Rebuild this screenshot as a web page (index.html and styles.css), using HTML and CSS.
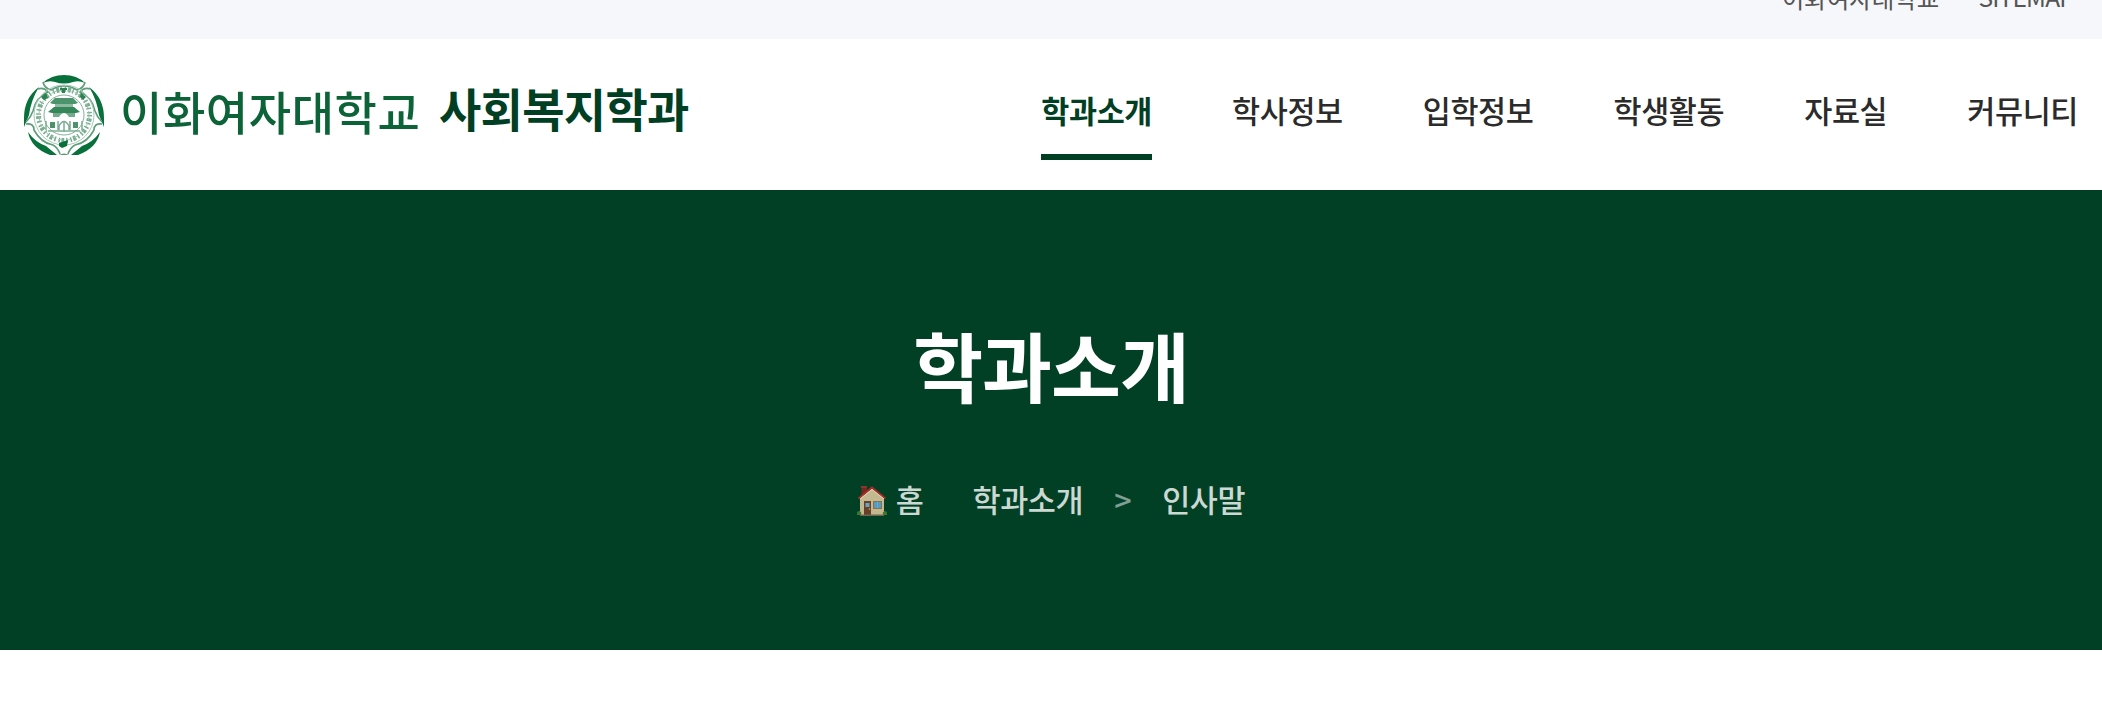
FILE: index.html
```html
<!DOCTYPE html>
<html lang="ko">
<head>
<meta charset="utf-8">
<title>학과소개 - 이화여자대학교 사회복지학과</title>
<link rel="stylesheet" href="styles.css">
</head>
<body>
<div class="topbar"><a class="top-link">이화여자대학교</a><a class="top-link">SITEMAP</a></div>
<header class="header">
  <div class="brand">
    <svg class="emblem" viewBox="0 0 80 80" fill="none">
      <path d="M19 8Q27 0 40 0Q53 0 61 8Q55 5 49 7Q40 10 31 7Q25 5 19 8Z" fill="#08703a"/>
      <path d="M15 12Q0 23 0 43V52Q3 45 5 40Q7 25 15 12ZM65 12Q80 23 80 43V52Q77 45 75 40Q73 25 65 12Z" fill="#08703a"/>
      <path d="M4 57Q7 73 26 80H33Q28 76 22 71Q11 67 4 57ZM76 57Q73 73 54 80H47Q52 76 58 71Q69 67 76 57Z" fill="#08703a"/>
      <g stroke="#5d9d79" stroke-width="1.600">
        <path d="M19 7Q20 13 27 15Q40 7 53 15Q60 13 61 7"/>
        <path d="M14 14Q20 12 24 17Q12 22 9 36Q7 42 2 47"/>
        <path d="M66 14Q60 12 56 17Q68 22 71 36Q73 42 78 47"/>
        <path d="M2 49Q10 48 10 55Q17 68 29 70Q34 73 36 79"/>
        <path d="M78 49Q70 48 70 55Q63 68 51 70Q46 73 44 79"/>
      </g>
      <path d="M35 80Q40 77 45 80Z" fill="#5a9a76"/>
      <circle cx="40" cy="40" r="20" stroke="#82b498" stroke-width="1"/>
      <circle cx="40" cy="40" r="30" stroke="#a5cab5" stroke-width="1"/>
      <circle cx="40" cy="40" r="25.500" stroke="#79ad90" stroke-width="5" stroke-dasharray="1.5 2 3 1.4 1.4 2.7"/>
      <circle cx="40" cy="40" r="25" stroke="#98c3aa" stroke-width="1" stroke-dasharray="5 3"/>
      <path d="M17 22L22 18L24 23L20 25ZM36 13H43V15H41V18H38V15H36ZM57 18L62 22L59 25L56 22Z" fill="#2c8052"/>
      <path d="M31 23H49L54 28L51 29H29L26 28Z" fill="#4c946c"/>
      <path d="M31 29H49V32H31Z" fill="#8dbaa0"/>
      <path d="M30 32H50L56 37L52 38H28L24 37Z" fill="#35875a"/>
      <path d="M29 38H51V42H45Q40 34 35 42H29Z" fill="#75aa8d"/>
      <path d="M26 47H31V53H26ZM49 47H54V53H49Z" fill="#4b946b"/>
      <path d="M22 46V55M34 46V55M46 46V55M58 46V55M35 55V51Q40 42 45 51V55M40 47V57M24 56H56" stroke="#7bae92" stroke-width="1.500"/>
      <path d="M35 68L44 65L43 71L38 73L35 71Z" fill="#08703a"/>
    </svg>
    <span class="university">이화여자대학교</span>
    <span class="department">사회복지학과</span>
  </div>
  <nav class="nav">
    <a class="nav-item active">학과소개</a>
    <a class="nav-item">학사정보</a>
    <a class="nav-item">입학정보</a>
    <a class="nav-item">학생활동</a>
    <a class="nav-item">자료실</a>
    <a class="nav-item">커뮤니티</a>
  </nav>
</header>
<main class="hero">
  <h1 class="title">학과소개</h1>
  <div class="crumbs">
    <svg class="house" viewBox="0 0 30 30">
      <path d="M4.500 0H10V10H4.500Z" fill="#76281f"/>
      <path d="M4 0H10V2H4Z" fill="#8c342a"/>
      <path d="M3 12L15 2L27 12V29H3Z" fill="#c3b991"/>
      <path d="M1.500 12.500L15 1.500L28.500 12.500" fill="none" stroke="#a72d29" stroke-width="2"/>
      <path d="M3 13L15 3.500L27 13" fill="none" stroke="#dfd4b0" stroke-width="1"/>
      <path d="M7 15H14V29H7Z" fill="#68402a"/>
      <path d="M8.500 17H12.500V21H8.500Z" fill="#62a7c9"/>
      <path d="M16 15H25V23H16Z" fill="#876f50"/>
      <path d="M17 16H24V22H17Z" fill="#5799c0"/>
      <path d="M20.500 16V22" stroke="#78afca" stroke-width=".7"/>
      <circle cx="12.500" cy="23" r=".8" fill="#cfae62"/>
      <path d="M0 28Q0 25 2.500 25Q5 26 4 29H0ZM26 29Q25 26 27.500 25Q30 25 30 28V29Z" fill="#41772e"/>
      <path d="M3 28.500H27V30H3Z" fill="#71664f"/>
    </svg>
    <span class="home">홈</span>
    <span class="crumb">학과소개</span>
    <span class="sep">&gt;</span>
    <span class="crumb">인사말</span>
  </div>
</main>
</body>
</html>
```
FILE: styles.css
```css
* { box-sizing: border-box; }
body {
  margin: 0;
  height: 704px;
  overflow: hidden;
  background: #fff;
  font-family: "Noto Sans CJK KR", sans-serif;
}
.topbar {
  height: 39px;
  padding-right: 28px;
  display: flex;
  justify-content: flex-end;
  align-items: flex-end;
  gap: 39px;
  overflow: hidden;
  background: #f6f7fa;
  color: #555;
  font-size: 24.5px;
  line-height: 40px;
}
.top-link { margin-bottom: 21px; }
.top-link:last-child { margin-bottom: 22px; letter-spacing: -0.8px; }
.header {
  height: 151px;
  padding: 0 24px;
  display: flex;
  justify-content: space-between;
  align-items: flex-start;
}
.brand { display: flex; align-items: flex-start; }
.emblem { width: 80px; height: 80px; margin-top: 36px; filter: blur(0.6px); }
.university {
  margin: 36px 0 0 16px;
  width: 319px;
  color: #0c6338;
  font-size: 46px;
  font-weight: 500;
  line-height: 70px;
  letter-spacing: 0.6px;
  white-space: nowrap;
  filter: blur(0.5px);
}
.department {
  color: #003f24;
  font-size: 46px;
  font-weight: 700;
  line-height: 70px;
  letter-spacing: -0.7px;
  margin-top: 33px;
}
.nav { display: flex; gap: 80px; }
.nav-item {
  height: 121px;
  padding-top: 47px;
  font-size: 30.5px;
  font-weight: 500;
  line-height: 48px;
  letter-spacing: -0.38px;
  color: #2b2b2b;
}
.active { color: #003f24; font-weight: 700; border-bottom: 6px solid #003f24; }
.hero {
  height: 460px;
  padding-top: 114px;
  display: flex;
  flex-direction: column;
  align-items: center;
  background: #024026;
}
.title {
  margin: 0;
  font-size: 76px;
  line-height: 120px;
  letter-spacing: -1px;
  font-weight: 700;
  color: #fff;
}
.crumbs {
  display: flex;
  align-items: flex-start;
  margin-top: 51px;
  color: #ccd9d3;
  font-size: 30.5px;
  font-weight: 500;
  line-height: 48px;
  letter-spacing: -0.4px;
}
.house { width: 30px; height: 30px; margin-top: 11px; }
.home { margin: 0 49px 0 9px; }
.sep { margin: 0 31px; color: #809f92; }
```
